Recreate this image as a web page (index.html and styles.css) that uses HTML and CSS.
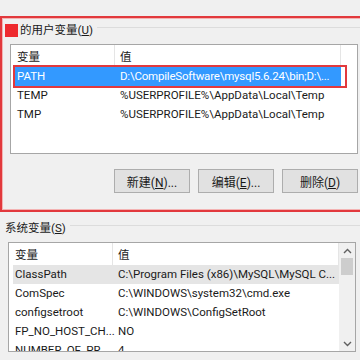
FILE: index.html
```html
<!DOCTYPE html>
<html lang="zh-CN">
<head>
  <meta charset="UTF-8" />
  <title>环境变量</title>
  <link rel="stylesheet" href="styles.css">
</head>
<body>

  <div class="user-box">
    <div class="legend">
      <span class="redact"></span>
      <span class="legend-text">的用户变量(<u>U</u>)</span>
      <span class="rule"></span>
    </div>

    <div class="list">
      <div class="list-main">
        <div class="list-head">
          <div class="head-cell">变量</div>
          <div class="head-cell">值</div>
        </div>
        <div class="row selected">
          <div class="cell">PATH</div>
          <div class="cell long">D:\CompileSoftware\mysql5.6.24\bin;D:\...</div>
        </div>
        <div class="row">
          <div class="cell">TEMP</div>
          <div class="cell">%USERPROFILE%\AppData\Local\Temp</div>
        </div>
        <div class="row">
          <div class="cell">TMP</div>
          <div class="cell">%USERPROFILE%\AppData\Local\Temp</div>
        </div>
      </div>
    </div>

    <div class="button-row">
      <button class="btn">新建(<u>N</u>)...</button>
      <button class="btn">编辑(<u>E</u>)...</button>
      <button class="btn">删除(<u>D</u>)</button>
    </div>
  </div>

  <div class="sys-legend">
    <span class="legend-text">系统变量(<u>S</u>)</span>
    <span class="rule"></span>
  </div>

  <div class="list sys-list">
    <div class="list-main">
      <div class="list-head">
        <div class="head-cell">变量</div>
        <div class="head-cell">值</div>
      </div>
      <div class="row hover">
        <div class="cell">ClassPath</div>
        <div class="cell">C:\Program Files (x86)\MySQL\MySQL C...</div>
      </div>
      <div class="row">
        <div class="cell">ComSpec</div>
        <div class="cell">C:\WINDOWS\system32\cmd.exe</div>
      </div>
      <div class="row">
        <div class="cell">configsetroot</div>
        <div class="cell">C:\WINDOWS\ConfigSetRoot</div>
      </div>
      <div class="row">
        <div class="cell">FP_NO_HOST_CH...</div>
        <div class="cell">NO</div>
      </div>
      <div class="row">
        <div class="cell">NUMBER_OF_PR...</div>
        <div class="cell">4</div>
      </div>
    </div>
    <div class="scrollbar">
      <div class="arrow">
        <svg width="9" height="6" viewBox="0 0 9 6"><polyline points="1,5 4.5,1.5 8,5" fill="none" stroke="#606060" stroke-width="1.4"/></svg>
      </div>
      <div class="track">
        <div class="thumb"></div>
      </div>
      <div class="arrow">
        <svg width="9" height="6" viewBox="0 0 9 6"><polyline points="1,1 4.5,4.5 8,1" fill="none" stroke="#606060" stroke-width="1.4"/></svg>
      </div>
    </div>
  </div>

</body>
</html>
```

FILE: styles.css
```css
* {
  margin: 0;
  padding: 0;
  box-sizing: border-box;
}

body {
  width: 360px;
  height: 360px;
  overflow: hidden;
  background: #f0f0f0;
  color: #1a1a1a;
  font-family: Roboto, "Noto Sans CJK SC", sans-serif;
  font-size: 11.5px;
}

u {
  text-decoration: underline;
  text-underline-offset: 1px;
}

/* red annotation frame round the user variables */
.user-box {
  width: 370px;
  margin-top: 16px;
  border: 2px solid #e2393d;
  box-shadow: inset 0 0 0 1px #f3b3b3;
  padding: 4px 0 17px 0;
}

.legend {
  display: flex;
  align-items: center;
  height: 16px;
}

.redact {
  width: 13px;
  height: 13px;
  margin-left: 3px;
  background: #ee2a2f;
}

.legend-text {
  padding: 0 4px 0 2px;
  line-height: 16px;
  white-space: nowrap;
}

.rule {
  flex: 1;
  align-self: flex-start;
  margin-top: 5px;
  border-top: 1px solid #dcdcdc;
}

.list {
  display: flex;
  width: 348px;
  height: 110px;
  margin: 6px 0 0 8px;
  background: #fff;
  border: 1px solid #a6a6a6;
  overflow: hidden;
}

.list-main {
  width: 330px;
}

.list-head {
  display: grid;
  grid-template-columns: 104px 1fr;
  height: 22px;
}

.head-cell {
  padding: 3px 0 0 6px;
  line-height: 18px;
  border-right: 1px solid #e5e5e5;
}

.head-cell + .head-cell {
  padding-left: 5px;
}

.row {
  position: relative;
  display: grid;
  grid-template-columns: 103px 1fr;
  height: 19px;
  margin-left: 4px;
  line-height: 19px;
  white-space: nowrap;
}

.cell {
  padding-left: 2px;
  overflow: hidden;
}

.cell.long {
  letter-spacing: -0.2px;
}

.row.selected {
  background: #3399ff;
  color: #fff;
}

.row.selected::after {
  content: "";
  position: absolute;
  left: -2px;
  right: -6px;
  top: -2px;
  bottom: -2px;
  border: 2px solid #e2393d;
}

.row.hover {
  background: #e5e5e5;
}

.button-row {
  display: flex;
  justify-content: flex-end;
  gap: 8px;
  width: 348px;
  margin: 15px 0 0 8px;
}

.btn {
  width: 76px;
  height: 24px;
  background: #e1e1e1;
  border: 1px solid #adadad;
  font-family: inherit;
  font-size: 12px;
  color: #1a1a1a;
}

.sys-legend {
  display: flex;
  height: 16px;
  margin-top: 8px;
}

.sys-legend .legend-text {
  padding-left: 5px;
}

.sys-list {
  margin-top: 6px;
}

.scrollbar {
  display: flex;
  flex-direction: column;
  width: 16px;
  background: #f0f0f0;
}

.arrow {
  height: 15px;
  display: flex;
  justify-content: center;
  align-items: center;
}

.track {
  flex: 1;
}

.thumb {
  width: 12px;
  height: 17px;
  margin-left: 2px;
  background: #cdcdcd;
}
```
